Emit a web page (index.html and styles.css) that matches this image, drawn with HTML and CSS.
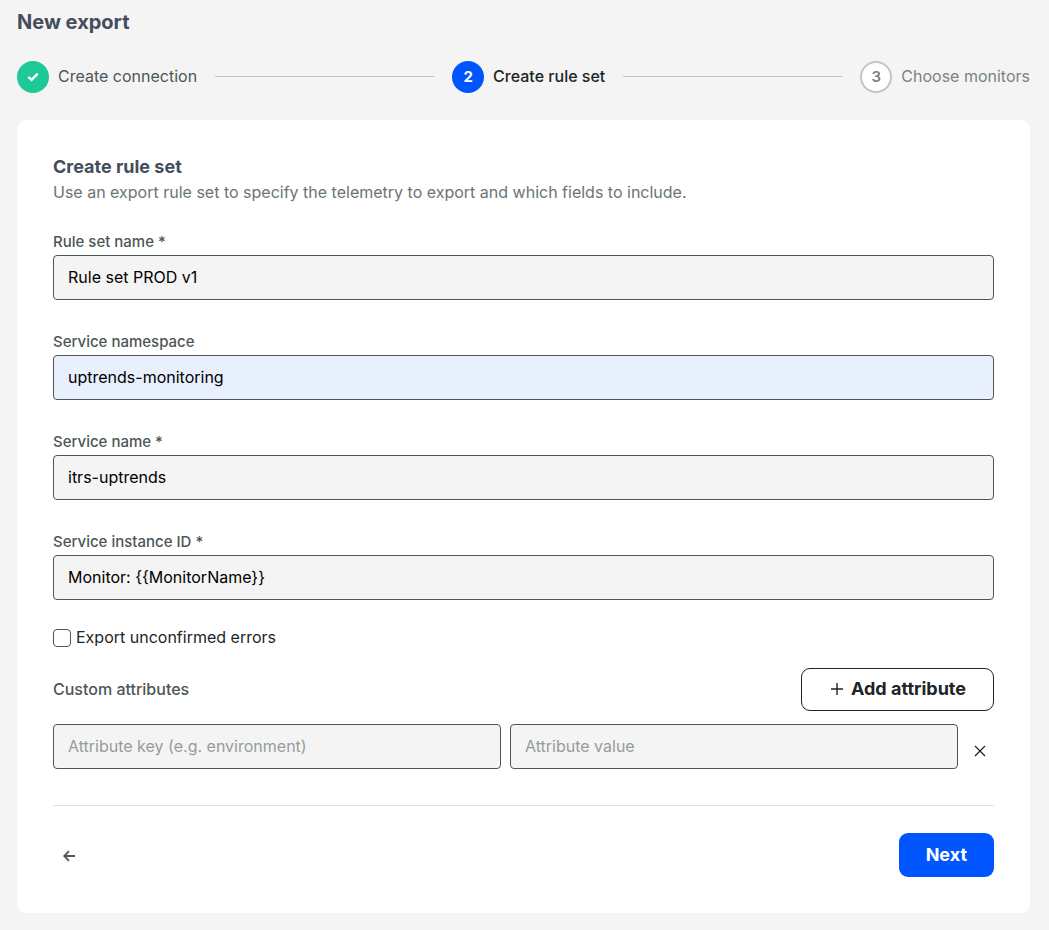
FILE: index.html
```
<!DOCTYPE html>
<html lang="en">
<head>
    <meta charset="UTF-8">
    <meta name="viewport" content="width=device-width, initial-scale=1.0">
    <title>New export</title>
    <link rel="stylesheet" href="styles.css">
</head>
<body>
    <h1>New export</h1>

    <ol class="steps">
        <li class="step done">
            <span class="step-circle">
                <svg width="12" height="10" viewBox="0 0 12 10" aria-hidden="true"><path d="M1.3 4.8 4.6 7.9 10.7 1.6" fill="none" stroke="currentColor" stroke-width="2.4"/></svg>
            </span>
            <span class="step-name">Create connection</span>
        </li>
        <li class="step-line" aria-hidden="true"></li>
        <li class="step active" aria-current="step">
            <span class="step-circle">2</span>
            <span class="step-name">Create rule set</span>
        </li>
        <li class="step-line" aria-hidden="true"></li>
        <li class="step">
            <span class="step-circle">3</span>
            <span class="step-name">Choose monitors</span>
        </li>
    </ol>

    <form class="card">
        <h2>Create rule set</h2>
        <p class="intro">Use an export rule set to specify the telemetry to export and which fields to include.</p>

        <div class="field">
            <label for="rule-set-name">Rule set name *</label>
            <input type="text" id="rule-set-name" value="Rule set PROD v1" required>
        </div>
        <div class="field">
            <label for="service-namespace">Service namespace</label>
            <input type="text" id="service-namespace" class="autofilled" value="uptrends-monitoring">
        </div>
        <div class="field">
            <label for="service-name">Service name *</label>
            <input type="text" id="service-name" value="itrs-uptrends" required>
        </div>
        <div class="field">
            <label for="service-instance">Service instance ID *</label>
            <input type="text" id="service-instance" value="Monitor: {{MonitorName}}" required>
        </div>

        <div class="check">
            <input type="checkbox" id="unconfirmed">
            <label for="unconfirmed">Export unconfirmed errors</label>
        </div>

        <div class="attributes-header">
            <h3>Custom attributes</h3>
            <button type="button" class="btn btn-outline">
                <svg width="12" height="12" viewBox="0 0 12 12" aria-hidden="true"><path d="M6 0v12M0 6h12" fill="none" stroke="currentColor" stroke-width="1.4"/></svg>
                Add attribute
            </button>
        </div>
        <div class="attribute-row">
            <input type="text" placeholder="Attribute key (e.g. environment)" aria-label="Attribute key">
            <input type="text" placeholder="Attribute value" aria-label="Attribute value">
            <button type="button" class="icon-btn remove" aria-label="Remove attribute">
                <svg width="12" height="12" viewBox="0 0 12 12" aria-hidden="true"><path d="M1 1l10 10M11 1 1 11" fill="none" stroke="currentColor" stroke-width="1.3"/></svg>
            </button>
        </div>

        <div class="actions">
            <button type="button" class="icon-btn back" aria-label="Back">
                <svg width="12" height="12" viewBox="0 0 12 12" aria-hidden="true"><path d="M12 6H1.2M6 1.2 1.2 6 6 10.8" fill="none" stroke="currentColor" stroke-width="1.8"/></svg>
            </button>
            <button type="submit" class="btn btn-primary">Next</button>
        </div>
    </form>
</body>
</html>
```

FILE: styles.css
```
* {
    box-sizing: border-box;
}

body {
    margin: 0;
    padding: 8px 19px 17px 17px;
    background-color: #f4f4f4;
    color: #1d2526;
    font-family: Inter, "Liberation Sans", sans-serif;
    font-size: 16px;
    line-height: 24px;
}

h1, h2, h3, p {
    margin: 0;
}

h1 {
    color: #444d5c;
    font-size: 20px;
    font-weight: 700;
    line-height: 28px;
}

.steps {
    display: flex;
    align-items: center;
    gap: 18px;
    margin: 25px 0 27px;
    padding: 0;
    list-style: none;
}

.step {
    display: flex;
    align-items: center;
    gap: 9px;
    color: #7b8282;
}

.step-name {
    padding-bottom: 2px;
}

.step-line {
    flex: 1;
    height: 1px;
    margin-bottom: 2px;
    background-color: #c0c4c4;
}

.step-circle {
    display: flex;
    align-items: center;
    justify-content: center;
    width: 32px;
    height: 32px;
    border: 2px solid #c4c4c4;
    border-radius: 50%;
    background-color: white;
    color: #7b8282;
    font-size: 15px;
    font-weight: 600;
}

.done {
    color: #4d5656;
}

.done .step-circle {
    border-color: #1dc997;
    background-color: #1dc997;
    color: white;
}

.active {
    color: #1d2526;
    font-weight: 500;
}

.active .step-circle {
    border-color: #0055ff;
    background-color: #0055ff;
    color: white;
    font-weight: 700;
}

.card {
    padding: 36px;
    border-radius: 9px;
    background-color: white;
}

h2 {
    color: #444d5c;
    font-size: 18px;
    font-weight: 700;
    line-height: 22px;
}

.intro {
    margin: 2px 0 27px;
    color: #6b7474;
}

.field {
    margin-bottom: 31px;
}

.field label {
    display: block;
    padding-bottom: 2px;
    color: #4d5656;
    font-size: 15px;
    font-weight: 500;
    line-height: 22px;
}

input[type="text"] {
    display: block;
    width: 100%;
    height: 45px;
    padding: 0 14px 2px;
    border: 1px solid #4d5656;
    border-radius: 4px;
    background-color: #f4f4f4;
    color: black;
    font: inherit;
}

input[type="text"].autofilled {
    background-color: #e8f0fe;
}

input::placeholder {
    color: #949c9c;
    opacity: 1;
}

.check {
    display: flex;
    align-items: center;
    gap: 5px;
    margin-top: -5px;
}

.check label {
    padding-bottom: 1px;
    line-height: 22px;
}

.check input {
    appearance: none;
    width: 18px;
    height: 18px;
    margin: 0;
    border: 1px solid #4d5656;
    border-radius: 4px;
    background-color: white;
}

.check input:checked {
    background-color: #0055ff;
}

.attributes-header {
    display: flex;
    align-items: center;
    justify-content: space-between;
    margin: 19px 0 13px;
}

h3 {
    padding-bottom: 2px;
    color: #4d5656;
    font-size: 16px;
    font-weight: 500;
}

.btn {
    display: flex;
    align-items: center;
    gap: 8px;
    border-radius: 9px;
    font: inherit;
    font-size: 18px;
    font-weight: 700;
    cursor: pointer;
}

.btn-outline {
    height: 43px;
    padding: 0 27px 2px 29px;
    border: 1px solid #1d2526;
    background-color: white;
    color: #1d2526;
}

.btn-primary {
    height: 44px;
    padding: 0 27px;
    border: none;
    background-color: #0055ff;
    color: white;
}

.attribute-row {
    display: flex;
    align-items: center;
    gap: 9px;
    padding-bottom: 36px;
    border-bottom: 1px solid #dee2e2;
}

.icon-btn {
    display: flex;
    flex-shrink: 0;
    align-items: center;
    justify-content: center;
    padding: 0;
    border: none;
    background: none;
    cursor: pointer;
}

.remove {
    width: 27px;
    height: 45px;
    padding: 9px 2px 0 0;
    color: #1d2526;
}

.actions {
    display: flex;
    align-items: center;
    justify-content: space-between;
    padding-top: 27px;
}

.back {
    width: 32px;
    height: 44px;
    padding-top: 2px;
    color: #4d5656;
}
```
